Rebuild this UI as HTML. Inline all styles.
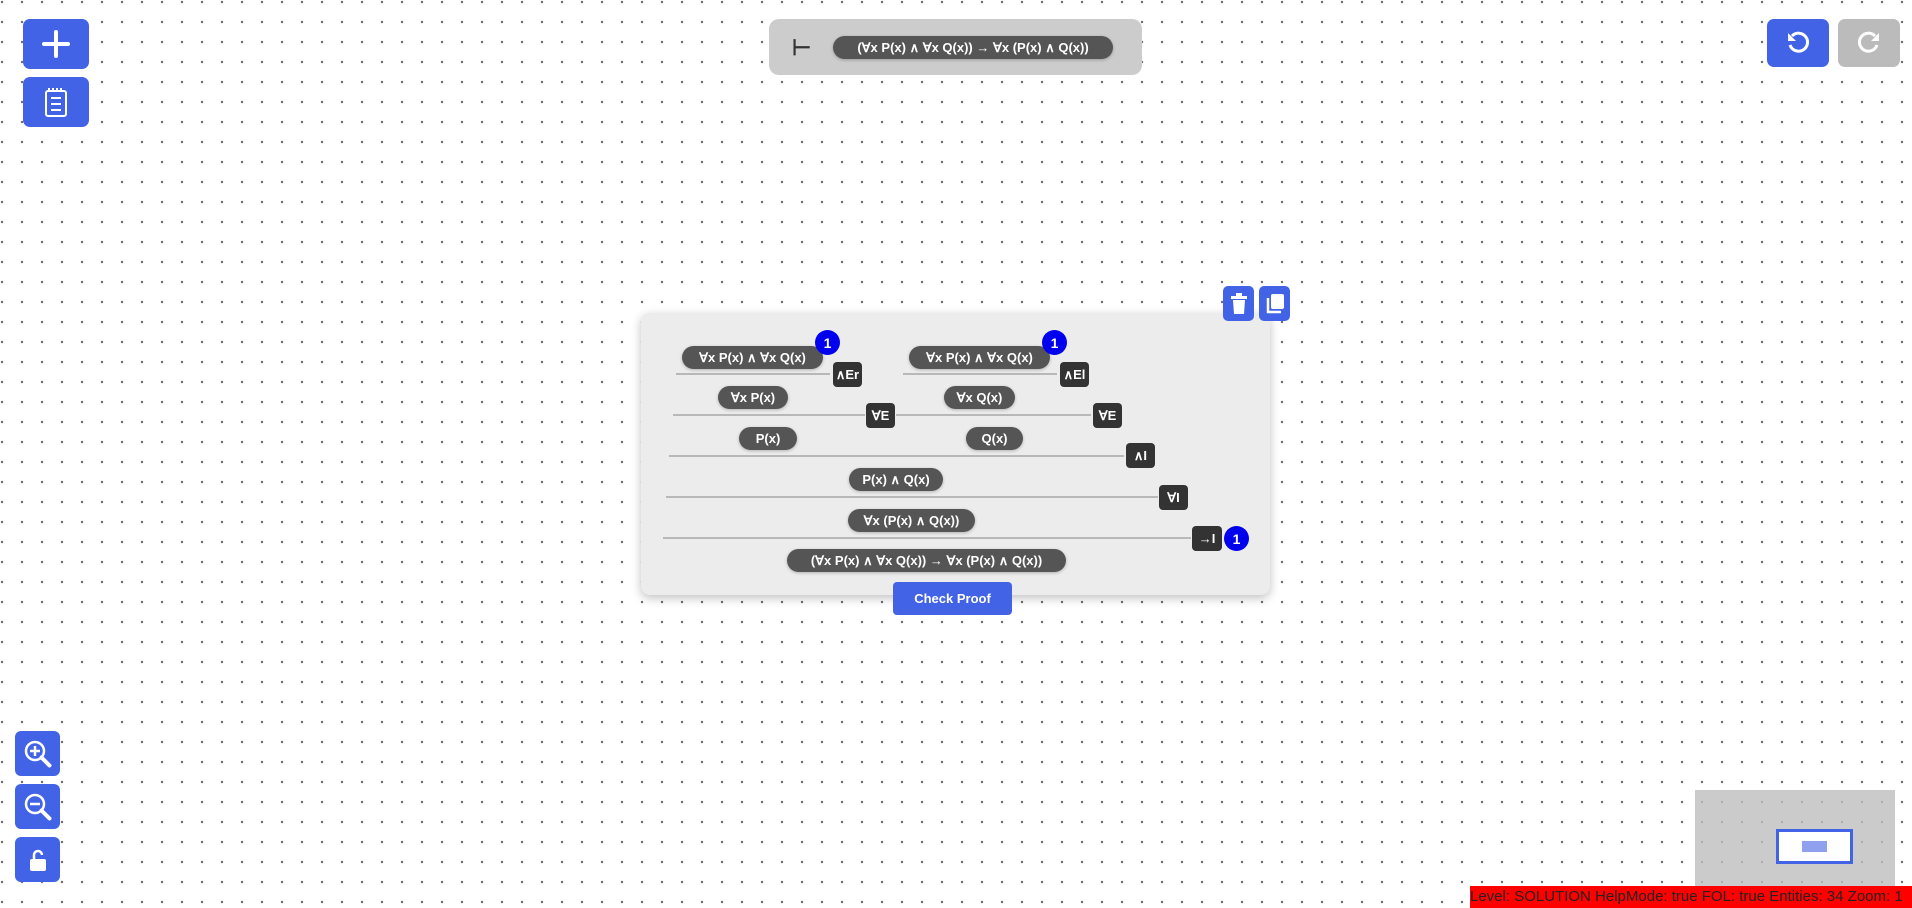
<!DOCTYPE html>
<html><head><meta charset="utf-8"><style>
*{margin:0;padding:0;box-sizing:border-box}
body{width:1912px;height:908px;overflow:hidden;position:relative;background:#fff;
background-image:radial-gradient(circle at 2px 2px,#6a6a6a 1px,transparent 1.4px);background-size:20px 20px;
font-family:"Liberation Sans",sans-serif}
.a{position:absolute}
.btn{position:absolute;background:#4263e6;border-radius:7px;display:flex;align-items:center;justify-content:center}
.pill{position:absolute;height:23px;background:#555;color:#fff;border-radius:12px;font-weight:bold;font-size:13px;display:flex;align-items:center;justify-content:center;white-space:nowrap;box-shadow:0 1px 3px rgba(0,0,0,.25)}
.rule{position:absolute;height:25px;width:29px;background:#333;color:#fff;border-radius:4px;font-weight:bold;font-size:13px;display:flex;align-items:center;justify-content:center}
.ln{position:absolute;height:1.5px;background:#b8b8b8}
.bd{position:absolute;width:25px;height:25px;border-radius:50%;background:#0000ee;color:#fff;font-weight:bold;font-size:14px;display:flex;align-items:center;justify-content:center}
</style></head><body>
<div class="btn" style="left:23px;top:19px;width:66px;height:50px"><svg width="30" height="30" viewBox="0 0 30 30"><path d="M15 3v24M3 15h24" stroke="#fff" stroke-width="4" stroke-linecap="round"/></svg></div>
<div class="btn" style="left:23px;top:77px;width:66px;height:50px"><svg width="26" height="32" viewBox="0 0 26 32"><rect x="3" y="5" width="20" height="25" rx="2" fill="none" stroke="#fff" stroke-width="2"/><path d="M6 2v4M10 2v4M14 2v4M18 2v4M8 12h10M8 18h10M8 24h10" stroke="#fff" stroke-width="2"/></svg></div>

<div class="a" style="left:769px;top:19px;width:373px;height:56px;background:#ccc;border-radius:10px"></div>
<div class="a" style="left:792px;top:35px;font-size:22px;font-weight:bold;color:#333">⊢</div>
<div class="pill" style="left:833px;top:36px;width:280px">(∀x P(x) ∧ ∀x Q(x)) → ∀x (P(x) ∧ Q(x))</div>

<div class="btn" style="left:1767px;top:19px;width:62px;height:48px"><svg width="26" height="26" viewBox="0 0 26 26"><path d="M7 6 A9 9 0 1 1 5 15" fill="none" stroke="#fff" stroke-width="3"/><path d="M3 3v8h8z" fill="#fff"/></svg></div>
<div class="btn" style="left:1838px;top:19px;width:62px;height:48px;background:#bbb"><svg width="26" height="26" viewBox="0 0 26 26"><path d="M19 6 A9 9 0 1 0 21 15" fill="none" stroke="#fff" stroke-width="3"/><path d="M23 3v8h-8z" fill="#fff"/></svg></div>

<div class="a" style="left:641px;top:313px;width:629px;height:282px;background:#ececec;border-radius:9px;box-shadow:0 3px 10px rgba(0,0,0,.25)"></div>
<div class="btn" style="left:1223px;top:286px;width:31px;height:35px;border-radius:5px"><svg width="18" height="22" viewBox="0 0 18 22"><rect x="1" y="3" width="16" height="3" fill="#fff"/><rect x="6" y="0" width="6" height="3" fill="#fff"/><path d="M3 7h12l-1 14H4z" fill="#fff"/></svg></div>
<div class="btn" style="left:1259px;top:286px;width:31px;height:35px;border-radius:5px"><svg width="20" height="22" viewBox="0 0 20 22"><rect x="6" y="1" width="13" height="15" rx="2" fill="#fff"/><path d="M3 5v14h13" fill="none" stroke="#fff" stroke-width="2.5"/></svg></div>

<div class="pill" style="left:682px;top:346px;width:141px">∀x P(x) ∧ ∀x Q(x)</div>
<div class="bd" style="left:815px;top:330px">1</div>
<div class="ln" style="left:676px;top:373px;width:154px"></div>
<div class="rule" style="left:833px;top:362px">∧Er</div>
<div class="pill" style="left:909px;top:346px;width:141px">∀x P(x) ∧ ∀x Q(x)</div>
<div class="bd" style="left:1042px;top:330px">1</div>
<div class="ln" style="left:903px;top:373px;width:154px"></div>
<div class="rule" style="left:1060px;top:362px">∧El</div>

<div class="pill" style="left:718px;top:386px;width:70px">∀x P(x)</div>
<div class="pill" style="left:944px;top:386px;width:71px">∀x Q(x)</div>
<div class="ln" style="left:673px;top:414px;width:192px"></div>
<div class="rule" style="left:866px;top:403px">∀E</div>
<div class="ln" style="left:896px;top:414px;width:195px"></div>
<div class="rule" style="left:1093px;top:403px">∀E</div>

<div class="pill" style="left:739px;top:427px;width:58px">P(x)</div>
<div class="pill" style="left:966px;top:427px;width:57px">Q(x)</div>
<div class="ln" style="left:669px;top:455px;width:455px"></div>
<div class="rule" style="left:1126px;top:443px">∧I</div>

<div class="pill" style="left:849px;top:468px;width:94px">P(x) ∧ Q(x)</div>
<div class="ln" style="left:666px;top:496px;width:492px"></div>
<div class="rule" style="left:1159px;top:485px">∀I</div>

<div class="pill" style="left:848px;top:509px;width:127px">∀x (P(x) ∧ Q(x))</div>
<div class="ln" style="left:663px;top:537px;width:528px"></div>
<div class="rule" style="left:1192px;top:526px;width:30px">→I</div>
<div class="bd" style="left:1224px;top:526px">1</div>

<div class="pill" style="left:787px;top:549px;width:279px">(∀x P(x) ∧ ∀x Q(x)) → ∀x (P(x) ∧ Q(x))</div>
<div class="btn" style="left:893px;top:582px;width:119px;height:33px;border-radius:4px;color:#fff;font-weight:bold;font-size:13px">Check Proof</div>

<div class="btn" style="left:15px;top:731px;width:45px;height:45px;border-radius:6px"><svg width="30" height="30" viewBox="0 0 30 30"><circle cx="12" cy="12" r="9" fill="none" stroke="#fff" stroke-width="2.5"/><path d="M18.5 18.5l8 8" stroke="#fff" stroke-width="4" stroke-linecap="round"/><path d="M12 7v10M7 12h10" stroke="#fff" stroke-width="2.5"/></svg></div>
<div class="btn" style="left:15px;top:784px;width:45px;height:45px;border-radius:6px"><svg width="30" height="30" viewBox="0 0 30 30"><circle cx="12" cy="12" r="9" fill="none" stroke="#fff" stroke-width="2.5"/><path d="M18.5 18.5l8 8" stroke="#fff" stroke-width="4" stroke-linecap="round"/><path d="M7 12h10" stroke="#fff" stroke-width="2.5"/></svg></div>
<div class="btn" style="left:15px;top:837px;width:45px;height:45px;border-radius:6px"><svg width="22" height="24" viewBox="0 0 22 24"><rect x="3" y="11" width="16" height="12" rx="2" fill="#fff"/><path d="M7 11V7a4 4 0 0 1 8 0" fill="none" stroke="#fff" stroke-width="2.5"/></svg></div>

<div class="a" style="left:1695px;top:790px;width:200px;height:99px;background:rgba(190,190,190,.8)"></div>
<div class="a" style="left:1776px;top:829px;width:77px;height:35px;border:3px solid #4263e6;background:#fff"></div>
<div class="a" style="left:1802px;top:841px;width:25px;height:11px;background:#8fa0ee"></div>
<div class="a" style="left:1470px;top:886px;width:442px;height:22px;background:#f00;color:#222;font-size:15px;line-height:22px;white-space:nowrap;overflow:hidden">Level: SOLUTION HelpMode: true FOL: true Entities: 34 Zoom: 1</div>
</body></html>
